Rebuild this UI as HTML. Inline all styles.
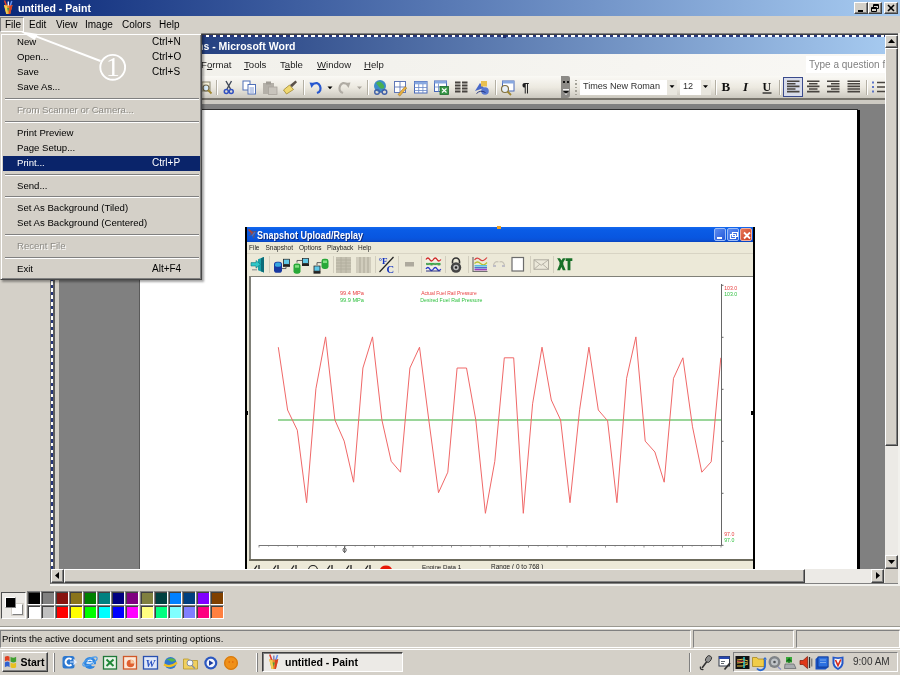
<!DOCTYPE html>
<html><head><meta charset="utf-8"><title>untitled - Paint</title>
<style>
*{box-sizing:border-box;margin:0;padding:0}
html,body{width:900px;height:675px;overflow:hidden;background:#d4d0c8}
#w{position:absolute;left:0;top:0;width:900px;height:675px;overflow:hidden;will-change:transform}
body{position:relative;font-family:"Liberation Sans",sans-serif;font-size:10px;color:#000}
.a{position:absolute}
.t{position:absolute;white-space:nowrap;line-height:12px;height:12px}
.b{font-weight:bold}
#ptitle{left:0;top:0;width:900px;height:16px;background:linear-gradient(90deg,#0a2878 0px,#a6caf0 890px)}
.capbtn{position:absolute;top:2px;height:12px;width:14px;background:#d4d0c8;border:1px solid;border-color:#fff #404040 #404040 #fff;box-shadow:inset -1px -1px 0 #808080}
.raised{background:#d4d0c8;border:1px solid;border-color:#fff #404040 #404040 #fff;box-shadow:inset -1px -1px 0 #808080}
.sunk{border:1px solid;border-color:#808080 #fff #fff #808080}
.sb{background:#ebe9e4}
.mi{position:absolute;left:2px;width:197px;height:15px}
.mi span{margin-left:1px}
.mi span{position:absolute;top:.7px;line-height:12px;font-size:9.600px}
.mi span.k{font-size:10px}
.sep{position:absolute;left:4px;width:194px;height:2px;border-top:1px solid #808080;border-bottom:1px solid #fff}
.dis{color:#8c8a84;text-shadow:1px 1px 0 #fff}
u{text-decoration:underline}
</style></head><body>
<div id="w">
<div class="a" id="ptitle"></div>
<svg class="a" style="left:2px;top:0px" width="12" height="15" viewBox="0 0 12 15"><path d="M2 5h8.500l-2.300 9h-4z" fill="#e88830"/><path d="M2 5h3l.8 9h-1.500z" fill="#f0d050"/><path d="M7.500 5h3l-2.300 9h-1.200z" fill="#d84020"/><path d="M5.200 8l1 4 1-4z" fill="#40a040"/><path d="M2.500 0.500l1.800 5" stroke="#e04030" stroke-width="1.500"/><path d="M6.300 1.500v4" stroke="#f0f0ff" stroke-width="1.400"/><path d="M9.800 1l-1.500 4.500" stroke="#6090f0" stroke-width="1.500"/></svg>
<div class="t b" style="left:18px;top:2px;font-size:10.5px;color:#fff">untitled - Paint</div>
<div class="capbtn" style="left:854px"><svg class="a" style="left:0;top:0" width="12" height="10"><rect x="3" y="7" width="5" height="2" fill="#000"/></svg></div><div class="capbtn" style="left:868px"><svg class="a" style="left:0;top:0" width="12" height="10"><path d="M4.5 1.5h5v4h-5zM4.5 2.5h5" stroke="#000" fill="none"/><path d="M2.500 4.500h5v4h-5z" stroke="#000" fill="#d4d0c8"/><path d="M2.500 5.500h5" stroke="#000" fill="none"/></svg></div><div class="capbtn" style="left:884px"><svg class="a" style="left:0;top:0" width="12" height="10"><path d="M3 2l6 6M9 2l-6 6" stroke="#000" stroke-width="1.6"/></svg></div>
<div class="a" style="left:0;top:16px;width:900px;height:17px;background:#d4d0c8"></div>
<div class="a" style="left:0;top:17px;width:24px;height:15px;border:1px solid;border-color:#808080 #fff #fff #808080"></div>
<div class="t" style="left:5px;top:19px;font-size:10px">File</div><div class="t" style="left:29px;top:19px;font-size:10px">Edit</div><div class="t" style="left:56px;top:19px;font-size:10px">View</div><div class="t" style="left:85px;top:19px;font-size:10px">Image</div><div class="t" style="left:122px;top:19px;font-size:10px">Colors</div><div class="t" style="left:159px;top:19px;font-size:10px">Help</div>
<div class="a" id="cf" style="left:50px;top:33px;width:848px;height:551px;background:#808080;overflow:hidden">
<div class="a" style="left:0px;top:0px;width:848px;height:1px;background:#808080"></div>
<div class="a" style="left:0px;top:1px;width:848px;height:1px;background:#404040"></div>
<div class="a" style="left:0px;top:0px;width:1px;height:551px;background:#6c6c6c"></div>
<div class="a" style="left:5px;top:4px;width:4px;height:532px;background:#d4d0c8"></div>
<div class="a" style="left:9px;top:4px;width:826px;height:17px;background:linear-gradient(90deg,#0a246a 0px,#a6caf0 830px)"></div>
<div class="t" style="left:147px;top:7px;font-size:10.5px;font-weight:bold;color:#fff">ns - Microsoft Word</div>
<div class="a" style="left:9px;top:21px;width:826px;height:22px;background:linear-gradient(90deg,#f1f0ea 0,#f3f2ed 40%,#f9f8f5 100%)"></div>
<div class="t" style="left:151px;top:26px;font-size:9.600px;color:#1c1c1c">F<u>o</u>rmat</div>
<div class="t" style="left:194px;top:26px;font-size:9.600px;color:#1c1c1c"><u>T</u>ools</div>
<div class="t" style="left:230px;top:26px;font-size:9.600px;color:#1c1c1c">T<u>a</u>ble</div>
<div class="t" style="left:267px;top:26px;font-size:9.600px;color:#1c1c1c"><u>W</u>indow</div>
<div class="t" style="left:314px;top:26px;font-size:9.600px;color:#1c1c1c"><u>H</u>elp</div>
<div class="a" style="left:756px;top:23px;width:79px;height:17px;background:#fff"></div>
<div class="t" style="left:759px;top:26px;font-size:10px;color:#808080">Type a question f</div>
<div class="a" style="left:9px;top:43px;width:826px;height:23px;background:linear-gradient(180deg,#faf9f5 0,#ece9e0 50%,#c8c5bc 100%)"></div>
<div class="a" style="left:9px;top:65px;width:826px;height:1.5px;background:#77746c"></div>
<div class="a" style="left:9px;top:66.5px;width:826px;height:4.5px;background:#cdcac2"></div>
<div class="a" style="left:9px;top:71px;width:826px;height:6px;background:#808080"></div>
<div class="a" style="left:90px;top:77px;width:717px;height:459px;background:#fff"></div>
<div class="a" style="left:807px;top:77px;width:3px;height:459px;background:#000"></div>
<div class="a" style="left:89px;top:76px;width:719px;height:1px;background:#303030"></div>
<div class="a" style="left:89px;top:77px;width:1px;height:459px;background:#5a5a5a"></div>
<div class="a" style="left:166px;top:47px;width:1px;height:15px;background:#b4b0a4;box-shadow:1px 0 0 #fff"></div>
<div class="a" style="left:252.5px;top:47px;width:1px;height:15px;background:#b4b0a4;box-shadow:1px 0 0 #fff"></div>
<div class="a" style="left:317px;top:47px;width:1px;height:15px;background:#b4b0a4;box-shadow:1px 0 0 #fff"></div>
<div class="a" style="left:444.5px;top:47px;width:1px;height:15px;background:#b4b0a4;box-shadow:1px 0 0 #fff"></div>
<div class="a" style="left:664.5px;top:47px;width:1px;height:15px;background:#b4b0a4;box-shadow:1px 0 0 #fff"></div>
<div class="a" style="left:729px;top:47px;width:1px;height:15px;background:#b4b0a4;box-shadow:1px 0 0 #fff"></div>
<div class="a" style="left:816px;top:47px;width:1px;height:15px;background:#b4b0a4;box-shadow:1px 0 0 #fff"></div>
<div class="a" style="left:510.5px;top:43px;width:9.5px;height:22px;background:#8c8a86;border-radius:0 2px 3px 0"></div>
<svg class="a" style="left:511px;top:43px" width="10" height="22" viewBox="0 0 10 22"><path d="M2 5h2v2H2zM6 5h2v2H6z" fill="#111"/><path d="M2 13h6v1.300H2z" fill="#f4f4f4"/><path d="M2 15h6l-3 3z" fill="#111"/><path d="M3.500 17.500l1.500 1.500 1.500-1.500z" fill="#fff"/></svg>
<div class="a" style="left:525px;top:47px;width:2px;height:15px;background:repeating-linear-gradient(180deg,#a4a298 0,#a4a298 1.300px,transparent 1.300px,transparent 3.500px)"></div>
<div class="a" style="left:530px;top:46.5px;width:97px;height:15.5px;background:#fff"></div>
<div class="a" style="left:617px;top:47px;width:10px;height:14.5px;background:#e8e6de"></div>
<div class="t" style="left:533px;top:47px;font-size:9.100px;color:#303030">Times New Roman</div>
<div class="a" style="left:629.5px;top:46.5px;width:31px;height:15.5px;background:#fff"></div>
<div class="a" style="left:650.5px;top:47px;width:10px;height:14.5px;background:#e8e6de"></div>
<div class="t" style="left:633px;top:47px;font-size:9.100px;color:#303030">12</div>
<div class="a" style="left:733px;top:44.3px;width:20px;height:19.4px;background:#d8dcea;border:1.500px solid #3a4a8c"></div>
<svg class="a" style="left:150px;top:43px" width="685" height="22" viewBox="200 76 685 22"><rect x="202" y="82" width="8" height="9" fill="#f4f0d8" stroke="#8c8870" stroke-width="1"/><circle cx="206" cy="88" r="3" fill="#d8ecf8" stroke="#70684c" stroke-width="1.200"/><path d="M208 90l3.500 3.500" stroke="#a08830" stroke-width="1.800"/><path d="M226 81l4.500 8M231.500 81l-4.500 8" stroke="#404858" stroke-width="1.400"/><circle cx="226.300" cy="91.500" r="2" fill="none" stroke="#3050c0" stroke-width="1.500"/><circle cx="231.200" cy="91.500" r="2" fill="none" stroke="#3050c0" stroke-width="1.500"/><rect x="243" y="81" width="7" height="9" fill="#fff" stroke="#5070b8" stroke-width="1"/><rect x="248" y="84.500" width="7.500" height="9.500" fill="#fff" stroke="#5070b8" stroke-width="1"/><path d="M249.500 88h4.500M249.500 90h4.500M249.500 92h4.500" stroke="#6080c8" stroke-width=".8"/><rect x="263" y="83" width="11" height="11" fill="#b4b0a8"/><rect x="266" y="81.500" width="5" height="3" fill="#a09c94"/><rect x="268.500" y="87" width="8.500" height="7.500" fill="#c8c4bc" stroke="#a8a49c" stroke-width=".8"/><path d="M283.500 90l6-5 4 4.500-7 4.500z" fill="#f0d870" stroke="#a08830" stroke-width=".8"/><path d="M290 85l5.500-4.500 1.500 1.800-5 5z" fill="#5a5048"/><path d="M312 84.500q6-3.500 8 1.500t-3 7" stroke="#2858d0" stroke-width="2.200" fill="none"/><path d="M309.500 82.500l5.500 0.500-3.500 5z" fill="#2858d0"/><path d="M327.500 86.500h5l-2.500 2.800z" fill="#000"/><path d="M348 84.500q-6-3.500-8 1.500t3 7" stroke="#b0aca4" stroke-width="2.200" fill="none"/><path d="M350.500 82.500l-5.500 0.500 3.500 5z" fill="#b0aca4"/><path d="M357 86.500h5l-2.500 2.800z" fill="#a8a49c"/><circle cx="380" cy="86" r="6" fill="#3c8cc8"/><path d="M376 83q3-3 6 0t2 5q-3 2-5-1t-3-4z" fill="#48b050"/><circle cx="377" cy="92" r="2.300" fill="none" stroke="#4060a8" stroke-width="1.400"/><circle cx="384.500" cy="92" r="2.300" fill="none" stroke="#4060a8" stroke-width="1.400"/><path d="M379 92h3.500" stroke="#4060a8" stroke-width="1.400"/><rect x="394.500" y="81.500" width="11" height="11" fill="#fff" stroke="#6078b8" stroke-width="1"/><path d="M394.500 87h11M400 81.500v11" stroke="#6078b8" stroke-width=".9"/><path d="M398 94.500l7-8 1.800 1.600-7 8z" fill="#e8b040" stroke="#906820" stroke-width=".5"/><rect x="414.500" y="81.500" width="12.500" height="11.500" fill="#fff" stroke="#4868b8" stroke-width="1"/><rect x="414.500" y="81.500" width="12.500" height="2.800" fill="#88a8e0"/><path d="M414.500 87.500h12.500M414.500 90.500h12.500M418.700 84v9M422.900 84v9" stroke="#6888c8" stroke-width=".8"/><rect x="434.500" y="81" width="12" height="10.500" fill="#fff" stroke="#4868b8" stroke-width="1"/><rect x="434.500" y="81" width="12" height="2.500" fill="#88a8e0"/><path d="M434.500 87h12M438.500 83.500v8" stroke="#6888c8" stroke-width=".8"/><rect x="440" y="86.500" width="8.500" height="8" fill="#389848" stroke="#1c6c2c" stroke-width=".8"/><path d="M442 88.500l4.500 4M446.500 88.500l-4.500 4" stroke="#fff" stroke-width="1.200"/><path d="M455 82.500h5.500M455 85.500h5.500M455 88.500h5.500M455 91.500h5.500M462 82.500h5.500M462 85.500h5.500M462 88.500h5.500M462 91.500h5.500" stroke="#484440" stroke-width="2"/><path d="M475 91l5-8 4 5z" fill="#4868c8"/><rect x="481" y="81" width="6" height="5.500" fill="#e8c050"/><circle cx="485" cy="91" r="3.800" fill="#5878d0"/><path d="M476.500 93.500q4-4 9-1" stroke="#283880" fill="none"/><rect x="502.500" y="81" width="11.500" height="10" fill="#fff" stroke="#4868b8" stroke-width="1"/><rect x="502.500" y="81" width="11.500" height="2.500" fill="#88a8e0"/><circle cx="505" cy="89" r="3.500" fill="#e8f0f8" stroke="#807040" stroke-width="1.200"/><path d="M507.500 91.500l3.500 3.500" stroke="#a08830" stroke-width="1.800"/><text x="522" y="92" font-family="Liberation Sans,sans-serif" font-weight="bold" font-size="13" fill="#202020">¶</text><text x="721.500" y="91.300" font-family="Liberation Serif,serif" font-weight="bold" font-size="13" fill="#101010">B</text><text x="743" y="91.300" font-family="Liberation Serif,serif" font-weight="bold" font-style="italic" font-size="13" fill="#101010">I</text><text x="762.500" y="90.500" font-family="Liberation Serif,serif" font-weight="bold" font-size="12" fill="#101010">U</text><path d="M762.500 93h9" stroke="#101010" stroke-width="1.200"/><path d="M787 81.2h12.5M787 83.8h8.5M787 86.4h12.5M787 89h8.5M787 91.6h12.5" stroke="#484440" stroke-width="1.600"/><path d="M807 81.2h12.5M809 83.8h8.5M807 86.4h12.5M809 89h8.5M807 91.6h12.5" stroke="#484440" stroke-width="1.600"/><path d="M827 81.2h12.5M831 83.8h8.5M827 86.4h12.5M831 89h8.5M827 91.6h12.5" stroke="#484440" stroke-width="1.600"/><path d="M847.5 81.2h12.5M847.5 83.8h12.5M847.5 86.4h12.5M847.5 89h12.5M847.5 91.6h12.5" stroke="#484440" stroke-width="1.600"/><path d="M873 81.500v2M873 86v2M873 90.500v2" stroke="#3050c0" stroke-width="1.500"/><path d="M877 82.500h8M877 87h8M877 91.500h8" stroke="#484440" stroke-width="1.400"/><path d="M669.500 85.300h5l-2.500 2.800z" fill="#000"/><path d="M703 85.300h5l-2.500 2.800z" fill="#000"/></svg>
<div class="a" style="left:195px;top:193.5px;width:509.6px;height:344px;background:#000"></div>
<div class="a" style="left:196.5px;top:194px;width:506.5px;height:343px;background:#ece9d8"></div>
<div class="a" style="left:196.5px;top:194px;width:506.5px;height:15px;background:linear-gradient(180deg,#1468ee 0,#0a5ce6 20%,#0856e0 70%,#0a52d8 85%,#0844c0 100%)"></div>
<div class="t" style="left:207px;top:195.5px;font-size:9px;font-weight:bold;color:#fff;text-shadow:1px 1px 0 #0a2a80;transform:scale(1,1.180);transform-origin:0 50%">Snapshot Upload/Replay</div>
<svg class="a" style="left:197px;top:195px" width="10" height="12" viewBox="0 0 10 12"><path d="M1 1l3 4-3 3 4-1 2 4 1-5 2-3-4 0z" fill="#5a5478"/><path d="M1.500 1.500l4 4" stroke="#c04030" stroke-width="1.500"/><path d="M5 8l3-4" stroke="#4070d0" stroke-width="1.300"/></svg>
<div class="a" style="left:663.5px;top:195.2px;width:12.3px;height:12.5px;background:linear-gradient(135deg,#5c8cf0,#2458d8);border:1px solid #9cbcf8;border-radius:2px"></div>
<div class="a" style="left:676.8px;top:195.2px;width:12.3px;height:12.5px;background:linear-gradient(135deg,#5c8cf0,#2458d8);border:1px solid #9cbcf8;border-radius:2px"></div>
<div class="a" style="left:690px;top:195.2px;width:12.3px;height:12.5px;background:linear-gradient(135deg,#e87858,#c83c20);border:1px solid #f0b0a0;border-radius:2px"></div>
<svg class="a" style="left:663.5px;top:195.5px" width="40" height="13" viewBox="0 0 40 13"><rect x="3" y="8" width="5" height="2" fill="#fff"/><path d="M18.500 3.500h5v4h-5zM16.500 5.500h5v4h-5z" stroke="#fff" fill="none" stroke-width="1.200"/><path d="M30 3.500l6 6M36 3.500l-6 6" stroke="#fff" stroke-width="1.800"/></svg>
<div class="t" style="left:199px;top:208.5px;font-size:6.500px;color:#222">File</div>
<div class="t" style="left:215.5px;top:208.5px;font-size:6.500px;color:#222">Snapshot</div>
<div class="t" style="left:249px;top:208.5px;font-size:6.500px;color:#222">Options</div>
<div class="t" style="left:277px;top:208.5px;font-size:6.500px;color:#222">Playback</div>
<div class="t" style="left:308px;top:208.5px;font-size:6.500px;color:#222">Help</div>
<div class="a" style="left:196.5px;top:219.5px;width:506.5px;height:1px;background:#d8d4c4"></div>
<div class="a" style="left:219px;top:223px;width:1px;height:17px;background:#d2cebe"></div>
<div class="a" style="left:283px;top:223px;width:1px;height:17px;background:#d2cebe"></div>
<div class="a" style="left:325px;top:223px;width:1px;height:17px;background:#d2cebe"></div>
<div class="a" style="left:348px;top:223px;width:1px;height:17px;background:#d2cebe"></div>
<div class="a" style="left:371px;top:223px;width:1px;height:17px;background:#d2cebe"></div>
<div class="a" style="left:394.5px;top:223px;width:1px;height:17px;background:#d2cebe"></div>
<div class="a" style="left:418px;top:223px;width:1px;height:17px;background:#d2cebe"></div>
<div class="a" style="left:479.5px;top:223px;width:1px;height:17px;background:#d2cebe"></div>
<div class="a" style="left:502.5px;top:223px;width:1px;height:17px;background:#d2cebe"></div>
<svg class="a" style="left:196px;top:221px" width="340" height="22" viewBox="0 0 340 22"><g transform="translate(0,1.800) scale(1,0.850)"><path d="M12 4l6-2.500v18l-6-2.500z" fill="#18a0a8"/><path d="M15 2.800l3-1.300v18l-3-1.300z" fill="#0c6c78"/><path d="M5 8h5V5.500l4.500 4.500-4.500 4.500V12H5z" fill="#30c8c8" stroke="#0c6c78" stroke-width=".6"/><path d="M6 16.500h5" stroke="#888" stroke-width="1.200"/><rect x="28" y="7" width="8" height="13" rx="3" fill="#1838a0"/><rect x="29" y="8" width="6" height="5" rx="2" fill="#38a8e0"/><rect x="37.500" y="4" width="6" height="6" fill="#60c8e8" stroke="#222" stroke-width=".8"/><rect x="37" y="10" width="7" height="3" fill="#222"/><path d="M36 15h4v-3" stroke="#555" fill="none"/><rect x="47.500" y="9" width="7" height="12" rx="2.500" fill="#28a838"/><rect x="49" y="11" width="4" height="3" fill="#80e080"/><rect x="56.500" y="3" width="6" height="6" fill="#60c8e8" stroke="#222" stroke-width=".8"/><rect x="56" y="9" width="7" height="3" fill="#222"/><path d="M51 8V5.500h5" stroke="#555" fill="none"/><rect x="75.500" y="3.500" width="7" height="12" rx="2.500" fill="#28a838"/><rect x="77" y="5.500" width="4" height="3" fill="#80e080"/><rect x="68" y="12" width="6" height="6" fill="#60c8e8" stroke="#222" stroke-width=".8"/><rect x="67.500" y="18" width="7" height="3" fill="#222"/><path d="M71 11V8h4.500" stroke="#555" fill="none"/></g><rect x="90" y="3" width="15" height="16" fill="#c4c0b0"/><path d="M90 6h15M90 9h15M90 12h15M90 15h15M95 3v16M100 3v16" stroke="#b0ac9c" stroke-width=".8"/><rect x="110" y="3" width="15" height="16" fill="#d0ccbc"/><path d="M114 3v16M118 3v16M122 3v16" stroke="#b8b4a4" stroke-width="1.500"/><path d="M133.500 18L147.500 3" stroke="#222" stroke-width="1.200"/><text x="132.500" y="10" font-family="Liberation Serif,serif" font-weight="bold" font-size="9" fill="#1030c0">°F</text><text x="140.500" y="18.500" font-family="Liberation Serif,serif" font-weight="bold" font-size="10.500" fill="#1030c0">C</text><rect x="159" y="8" width="9" height="4.500" fill="#aeaa9e"/><rect x="179.500" y="3" width="15" height="14.500" fill="#f4f1e4"/><path d="M180 5.500q1.900-3 3.700 0t3.700 0 3.700 0 3.700 0" stroke="#d02828" fill="none" stroke-width="1.400"/><path d="M180 10h14.500" stroke="#38b048" stroke-width="2.200"/><path d="M180 10.500q1.900-2 3.700 0t3.700 0 3.700 0 3.700 0" stroke="#909888" fill="none" stroke-width=".8"/><path d="M180 15q1.900-3 3.700 0t3.700 0 3.700 0 3.700 0" stroke="#2838c8" fill="none" stroke-width="1.400"/><path d="M180 17h14.500" stroke="#283080" stroke-width="1"/><path d="M206.500 9.500V7.500a3.500 3.500 0 0 1 7 0V9.500" stroke="#333" stroke-width="1.600" fill="none"/><circle cx="210" cy="13.500" r="5.200" fill="#444"/><circle cx="210" cy="13.500" r="2.800" fill="#bbb"/><circle cx="210" cy="13.500" r="1.200" fill="#222"/><path d="M227 3v14.500h14.500" stroke="#707070" fill="none" stroke-width="1.200"/><path d="M228.500 6q2.500-3.500 5.500-.5t7-2" stroke="#d84040" fill="none" stroke-width="1.200"/><path d="M228.500 9.500q3-3 6 0t6.500-1" stroke="#b8c030" fill="none" stroke-width="1.200"/><path d="M228.500 11.800h12.500" stroke="#58c0e0" stroke-width="1.600"/><path d="M228.500 13.800h12.500" stroke="#4060d0" stroke-width="1.400"/><path d="M228.500 15.700h12.500" stroke="#a040c0" stroke-width="1.400"/><path d="M247.500 11q1.500-4.500 5-3M258.500 11q-1.500-4.500-5-3" stroke="#c4c0b4" fill="none" stroke-width="1.100"/><path d="M247 12h3M256 12h3" stroke="#b0b0c0" stroke-width="1.300"/><rect x="266" y="3.500" width="11.500" height="13.500" fill="#fff" stroke="#6c6c6c" stroke-width="1.200"/><rect x="288" y="5.800" width="14.500" height="9.500" fill="#ebe8da" stroke="#b0aca0" stroke-width="1"/><path d="M288 5.800l7.200 5.500 7.300-5.500M288 15.300l5.700-5M302.500 15.300l-5.700-5" stroke="#b0aca0" fill="none" stroke-width=".9"/><g transform="translate(0,1.800) scale(.95,.8)"><path d="M327.500 3l2.500 5v3l-2.500 7h3l1.500-4 1.500 4h3l-2.500-7V8l2.500-5h-3l-1.500 3-1.500-3z" fill="#187028"/><path d="M336.500 3h7v3.500h-2V18h-3V6.500h-2z" fill="#187028"/></g></svg>
<div class="a" style="left:199px;top:242.5px;width:504px;height:284px;background:#808078"></div>
<div class="a" style="left:200.5px;top:244px;width:502.5px;height:282px;background:#fff"></div>
<div class="a" style="left:199px;top:526px;width:504px;height:1.5px;background:#6c6a5c"></div>
<div class="a" style="left:196.5px;top:527.5px;width:506.5px;height:9px;background:#ece9d8"></div>
<div class="t" style="left:372px;top:528px;font-size:6.200px;color:#222">Engine Data 1</div>
<div class="t" style="left:441px;top:528px;font-size:6.500px;color:#222">Range ( 0 to 768 )</div>
<svg class="a" style="left:200px;top:529px" width="150" height="8" viewBox="0 0 150 8"><path d="M9 3v5M7 3.500l-3 4.500" stroke="#222" stroke-width="1.300" fill="none"/><path d="M28 3v5M26 3.500l-3 4.500" stroke="#222" stroke-width="1.300" fill="none"/><path d="M46 3v5M44 3.500l-3 4.500" stroke="#222" stroke-width="1.300" fill="none"/><circle cx="63" cy="8" r="4.500" fill="none" stroke="#222" stroke-width="1.200"/><path d="M82 3v5M80 3.500l-3 4.500" stroke="#222" stroke-width="1.300" fill="none"/><path d="M101 3v5M99 3.500l-3 4.500" stroke="#222" stroke-width="1.300" fill="none"/><path d="M120 3v5M118 3.500l-3 4.500" stroke="#222" stroke-width="1.300" fill="none"/><ellipse cx="136" cy="8" rx="6" ry="4.500" fill="#e81808"/></svg>
<svg class="a" style="left:200px;top:243.2px" width="503" height="282" viewBox="0 0 503 282"><path d="M28 144H471" stroke="#78c878" stroke-width="1.300"/><polyline fill="none" stroke="#f06868" stroke-width="1" stroke-linejoin="miter" points="28.3,71.2 37.6,134.0 47.3,154.2 56.6,226.7 65.9,112.8 75.6,60.9 84.9,144.0 94.2,165.1 103.6,206.2 112.9,92.0 122.5,60.9 131.9,144.0 141.2,185.3 150.5,196.2 159.9,92.0 169.5,71.2 178.8,144.0 188.5,216.7 197.8,196.2 207.1,92.0 216.5,92.0 225.8,144.0 235.4,237.3 244.8,185.3 254.3,81.8 263.7,81.8 273.3,237.3 282.6,127.8 292.0,71.2 301.3,124.0 310.6,144.0 320.0,226.7 329.6,133.8 338.9,71.2 348.3,134.0 357.6,144.8 366.9,226.7 376.6,102.3 385.9,60.9 395.2,165.1 404.9,176.0 414.2,206.2 423.5,102.3 432.9,81.8 442.5,150.8 451.8,196.2 461.2,185.8 470.8,81.8"/><path d="M471.5 8V269" stroke="#666" stroke-width="1"/><path d="M471.5 9.3h2" stroke="#666" stroke-width="1"/><path d="M471.5 61.3h2" stroke="#666" stroke-width="1"/><path d="M471.5 113.3h2" stroke="#666" stroke-width="1"/><path d="M471.5 165.3h2" stroke="#666" stroke-width="1"/><path d="M471.5 217.3h2" stroke="#666" stroke-width="1"/><path d="M471.5 269.3h2" stroke="#666" stroke-width="1"/><path d="M9 269.500H472" stroke="#777" stroke-width="1"/><path d="M9.0 269v2.5M18.6 269v1.5M28.2 269v1.5M37.9 269v1.5M47.5 269v2.5M57.1 269v1.5M66.8 269v1.5M76.4 269v1.5M86.0 269v2.5M95.6 269v1.5M105.2 269v1.5M114.9 269v1.5M124.5 269v2.5M134.1 269v1.5M143.8 269v1.5M153.4 269v1.5M163.0 269v2.5M172.6 269v1.5M182.2 269v1.5M191.9 269v1.5M201.5 269v2.5M211.1 269v1.5M220.8 269v1.5M230.4 269v1.5M240.0 269v2.5M249.6 269v1.5M259.2 269v1.5M268.9 269v1.5M278.5 269v2.5M288.1 269v1.5M297.8 269v1.5M307.4 269v1.5M317.0 269v2.5M326.6 269v1.5M336.2 269v1.5M345.9 269v1.5M355.5 269v2.5M365.1 269v1.5M374.8 269v1.5M384.4 269v1.5M394.0 269v2.5M403.6 269v1.5M413.2 269v1.5M422.9 269v1.5M432.5 269v2.5M442.1 269v1.5M451.8 269v1.5M461.4 269v1.5M471.0 269v2.5" stroke="#777" stroke-width=".8"/><path d="M94.6 270v7M93.1 273l1.500-1.500 1.500 1.500v2l-1.500 1.500-1.500-1.500z" stroke="#555" stroke-width=".9" fill="#fff"/><text x="90" y="19.3" font-family="Liberation Sans,sans-serif" font-size="5.6" fill="#e84040" text-anchor="start">99.4 MPa</text><text x="90" y="25.8" font-family="Liberation Sans,sans-serif" font-size="5.6" fill="#30c040" text-anchor="start">99.9 MPa</text><text x="171.2" y="19.3" font-family="Liberation Sans,sans-serif" font-size="5.300" fill="#e84040" textLength="55.500" lengthAdjust="spacingAndGlyphs">Actual Fuel Rail Pressure</text><text x="170.3" y="25.8" font-family="Liberation Sans,sans-serif" font-size="5.300" fill="#30c040" textLength="62" lengthAdjust="spacingAndGlyphs">Desired Fuel Rail Pressure</text><text x="474.2" y="13.8" font-family="Liberation Sans,sans-serif" font-size="5.2" fill="#e84040" text-anchor="start">103.0</text><text x="474.2" y="20.3" font-family="Liberation Sans,sans-serif" font-size="5.2" fill="#30c040" text-anchor="start">103.0</text><text x="474.2" y="259.8" font-family="Liberation Sans,sans-serif" font-size="5.2" fill="#e84040" text-anchor="start">97.0</text><text x="474.2" y="266.3" font-family="Liberation Sans,sans-serif" font-size="5.2" fill="#30c040" text-anchor="start">97.0</text></svg>
<div class="a" style="left:195px;top:377.5px;width:3px;height:4px;background:#000"></div>
<div class="a" style="left:700.5px;top:377.5px;width:4px;height:4px;background:#000"></div>
<div class="a" style="left:447px;top:193px;width:4px;height:3px;background:#f0a020"></div>
<div class="a" style="left:1px;top:2.4px;width:834px;height:1.9px;background:repeating-linear-gradient(90deg,#fff 0,#fff 3.500px,#26367a 3.500px,#26367a 7.030px)"></div>
<div class="a" style="left:3px;top:4px;width:2px;height:532px;background:#5c5c5c"></div>
<div class="a" style="left:1.3px;top:2.4px;width:1.8px;height:534px;background:repeating-linear-gradient(180deg,#fff 0,#fff 3.500px,#26367a 3.500px,#26367a 7.030px)"></div>
<div class="a" style="left:453px;top:2px;width:3px;height:3px;background:#1c2c6c"></div>
<div class="a" style="left:835px;top:2px;width:13px;height:534px;background:#eceae6"></div>
<div class="a" style="left:835px;top:2px;width:13px;height:13px;"><div class="a raised" style="left:0;top:0;width:13px;height:13px"></div><svg class="a" style="left:3px;top:4px" width="7" height="4"><path d="M0 4h7L3.5 0z" fill="#000"/></svg></div>
<div class="a" style="left:835px;top:15px;width:13px;height:398px;"><div class="a raised" style="left:0;top:0;width:13px;height:398px"></div></div>
<div class="a" style="left:835px;top:522px;width:13px;height:14px;"><div class="a raised" style="left:0;top:0;width:13px;height:14px"></div><svg class="a" style="left:3px;top:5px" width="7" height="4"><path d="M0 0h7L3.5 4z" fill="#000"/></svg></div>
<div class="a" style="left:1px;top:536px;width:834px;height:14px;background:#eceae6"></div>
<div class="a" style="left:1px;top:536px;width:13px;height:14px;"><div class="a raised" style="left:0;top:0;width:13px;height:14px"></div><svg class="a" style="left:4px;top:3px" width="4" height="7"><path d="M4 0v7L0 3.5z" fill="#000"/></svg></div>
<div class="a" style="left:14px;top:536px;width:741px;height:14px;"><div class="a raised" style="left:0;top:0;width:741px;height:14px"></div></div>
<div class="a" style="left:821px;top:536px;width:13px;height:14px;"><div class="a raised" style="left:0;top:0;width:13px;height:14px"></div><svg class="a" style="left:5px;top:3px" width="4" height="7"><path d="M0 0v7L4 3.500z" fill="#000"/></svg></div>
<div class="a" style="left:835px;top:536px;width:13px;height:14px;background:#d4d0c8"></div>
</div>
<div class="a" style="left:898.400px;top:33px;width:1.600px;height:553px;background:#f2f1ed"></div>
<div class="a" style="left:50px;top:583.500px;width:850px;height:2.300px;background:#f2f1ed"></div>
<div class="a" id="fm" style="left:0;top:33px;width:201.500px;height:246.700px;background:#d4d0c8;border:1px solid;border-color:#d4d0c8 #484848 #484848 #d4d0c8;box-shadow:inset 1px 1px 0 #fff,inset -1px -1px 0 #808080,1.500px 1.500px 2px rgba(0,0,0,.35)">
<div class="mi" style="top:1.70px;"><span style="left:13px">New</span><span class="k" style="left:148px">Ctrl+N</span></div>
<div class="mi" style="top:16.64px;"><span style="left:13px">Open...</span><span class="k" style="left:148px">Ctrl+O</span></div>
<div class="mi" style="top:31.58px;"><span style="left:13px">Save</span><span class="k" style="left:148px">Ctrl+S</span></div>
<div class="mi" style="top:46.52px;"><span style="left:13px">Save As...</span></div>
<div class="sep" style="top:64.06px"></div>
<div class="mi dis" style="top:69.37px;"><span style="left:13px">From Scanner or Camera...</span></div>
<div class="sep" style="top:86.91px"></div>
<div class="mi" style="top:92.22px;"><span style="left:13px">Print Preview</span></div>
<div class="mi" style="top:107.16px;"><span style="left:13px">Page Setup...</span></div>
<div class="mi" style="top:122.10px;background:#0a246a;color:#fff;"><span style="left:13px">Print...</span><span class="k" style="left:148px">Ctrl+P</span></div>
<div class="sep" style="top:139.64px"></div>
<div class="mi" style="top:144.95px;"><span style="left:13px">Send...</span></div>
<div class="sep" style="top:162.49px"></div>
<div class="mi" style="top:167.80px;"><span style="left:13px">Set As Background (Tiled)</span></div>
<div class="mi" style="top:182.74px;"><span style="left:13px">Set As Background (Centered)</span></div>
<div class="sep" style="top:200.28px"></div>
<div class="mi dis" style="top:205.59px;"><span style="left:13px">Recent File</span></div>
<div class="sep" style="top:223.13px"></div>
<div class="mi" style="top:228.44px;"><span style="left:13px">Exit</span><span class="k" style="left:148px">Alt+F4</span></div>
</div>
<svg class="a" style="left:0;top:20px" width="140" height="70" viewBox="0 20 140 70"><path d="M34 35.600L100.500 61" stroke="#fff" stroke-width="2" fill="none"/><path d="M20 31.300l18 2.700-3.300 6z" fill="#fff"/><circle cx="112.700" cy="67.300" r="12.400" fill="none" stroke="#fff" stroke-width="1.900"/><text x="112.800" y="76" font-family="Liberation Serif,serif" font-size="27.500" fill="#fff" text-anchor="middle">1</text></svg>
<div class="a" style="left:1px;top:591.500px;width:25px;height:27.500px;background:#eceae6;border:1px solid;border-color:#505050 #fff #fff #505050"></div>
<div class="a" style="left:11.500px;top:603.500px;width:11.500px;height:11px;background:#fff;border:1px solid;border-color:#fff #808080 #808080 #fff;box-shadow:0 0 0 1px #d4d0c8"></div>
<div class="a" style="left:4.500px;top:597px;width:11.500px;height:11px;background:#000;border:1px solid;border-color:#fff #808080 #808080 #fff"></div>
<div class="a" style="left:27.0px;top:591px;width:14px;height:14px;background:#000000;border:1px solid;border-color:#808080 #fff #fff #808080;box-shadow:inset 1px 1px 0 #404040"></div><div class="a" style="left:41.1px;top:591px;width:14px;height:14px;background:#808080;border:1px solid;border-color:#808080 #fff #fff #808080;box-shadow:inset 1px 1px 0 #404040"></div><div class="a" style="left:55.1px;top:591px;width:14px;height:14px;background:#881410;border:1px solid;border-color:#808080 #fff #fff #808080;box-shadow:inset 1px 1px 0 #404040"></div><div class="a" style="left:69.2px;top:591px;width:14px;height:14px;background:#8a741c;border:1px solid;border-color:#808080 #fff #fff #808080;box-shadow:inset 1px 1px 0 #404040"></div><div class="a" style="left:83.2px;top:591px;width:14px;height:14px;background:#008000;border:1px solid;border-color:#808080 #fff #fff #808080;box-shadow:inset 1px 1px 0 #404040"></div><div class="a" style="left:97.3px;top:591px;width:14px;height:14px;background:#008080;border:1px solid;border-color:#808080 #fff #fff #808080;box-shadow:inset 1px 1px 0 #404040"></div><div class="a" style="left:111.4px;top:591px;width:14px;height:14px;background:#000080;border:1px solid;border-color:#808080 #fff #fff #808080;box-shadow:inset 1px 1px 0 #404040"></div><div class="a" style="left:125.4px;top:591px;width:14px;height:14px;background:#800080;border:1px solid;border-color:#808080 #fff #fff #808080;box-shadow:inset 1px 1px 0 #404040"></div><div class="a" style="left:139.5px;top:591px;width:14px;height:14px;background:#808040;border:1px solid;border-color:#808080 #fff #fff #808080;box-shadow:inset 1px 1px 0 #404040"></div><div class="a" style="left:153.5px;top:591px;width:14px;height:14px;background:#004040;border:1px solid;border-color:#808080 #fff #fff #808080;box-shadow:inset 1px 1px 0 #404040"></div><div class="a" style="left:167.6px;top:591px;width:14px;height:14px;background:#0080ff;border:1px solid;border-color:#808080 #fff #fff #808080;box-shadow:inset 1px 1px 0 #404040"></div><div class="a" style="left:181.7px;top:591px;width:14px;height:14px;background:#004080;border:1px solid;border-color:#808080 #fff #fff #808080;box-shadow:inset 1px 1px 0 #404040"></div><div class="a" style="left:195.7px;top:591px;width:14px;height:14px;background:#8000ff;border:1px solid;border-color:#808080 #fff #fff #808080;box-shadow:inset 1px 1px 0 #404040"></div><div class="a" style="left:209.8px;top:591px;width:14px;height:14px;background:#804000;border:1px solid;border-color:#808080 #fff #fff #808080;box-shadow:inset 1px 1px 0 #404040"></div>
<div class="a" style="left:27.0px;top:605px;width:14px;height:14px;background:#ffffff;border:1px solid;border-color:#808080 #fff #fff #808080;box-shadow:inset 1px 1px 0 #404040"></div><div class="a" style="left:41.1px;top:605px;width:14px;height:14px;background:#c0c0c0;border:1px solid;border-color:#808080 #fff #fff #808080;box-shadow:inset 1px 1px 0 #404040"></div><div class="a" style="left:55.1px;top:605px;width:14px;height:14px;background:#ff0000;border:1px solid;border-color:#808080 #fff #fff #808080;box-shadow:inset 1px 1px 0 #404040"></div><div class="a" style="left:69.2px;top:605px;width:14px;height:14px;background:#ffff00;border:1px solid;border-color:#808080 #fff #fff #808080;box-shadow:inset 1px 1px 0 #404040"></div><div class="a" style="left:83.2px;top:605px;width:14px;height:14px;background:#00ff00;border:1px solid;border-color:#808080 #fff #fff #808080;box-shadow:inset 1px 1px 0 #404040"></div><div class="a" style="left:97.3px;top:605px;width:14px;height:14px;background:#00ffff;border:1px solid;border-color:#808080 #fff #fff #808080;box-shadow:inset 1px 1px 0 #404040"></div><div class="a" style="left:111.4px;top:605px;width:14px;height:14px;background:#0000ff;border:1px solid;border-color:#808080 #fff #fff #808080;box-shadow:inset 1px 1px 0 #404040"></div><div class="a" style="left:125.4px;top:605px;width:14px;height:14px;background:#ff00ff;border:1px solid;border-color:#808080 #fff #fff #808080;box-shadow:inset 1px 1px 0 #404040"></div><div class="a" style="left:139.5px;top:605px;width:14px;height:14px;background:#ffff80;border:1px solid;border-color:#808080 #fff #fff #808080;box-shadow:inset 1px 1px 0 #404040"></div><div class="a" style="left:153.5px;top:605px;width:14px;height:14px;background:#00ff80;border:1px solid;border-color:#808080 #fff #fff #808080;box-shadow:inset 1px 1px 0 #404040"></div><div class="a" style="left:167.6px;top:605px;width:14px;height:14px;background:#80ffff;border:1px solid;border-color:#808080 #fff #fff #808080;box-shadow:inset 1px 1px 0 #404040"></div><div class="a" style="left:181.7px;top:605px;width:14px;height:14px;background:#8080ff;border:1px solid;border-color:#808080 #fff #fff #808080;box-shadow:inset 1px 1px 0 #404040"></div><div class="a" style="left:195.7px;top:605px;width:14px;height:14px;background:#ff0080;border:1px solid;border-color:#808080 #fff #fff #808080;box-shadow:inset 1px 1px 0 #404040"></div><div class="a" style="left:209.8px;top:605px;width:14px;height:14px;background:#ff8040;border:1px solid;border-color:#808080 #fff #fff #808080;box-shadow:inset 1px 1px 0 #404040"></div>
<div class="a" style="left:0;top:626px;width:900px;height:1px;background:#9a9890"></div>
<div class="a" style="left:0;top:627px;width:900px;height:1.500px;background:#fff"></div>
<div class="a sunk" style="left:0;top:630px;width:691px;height:18px"></div>
<div class="a sunk" style="left:693px;top:630px;width:101px;height:18px"></div>
<div class="a sunk" style="left:796px;top:630px;width:104px;height:18px"></div>
<div class="t" style="left:2px;top:633px;font-size:9.550px">Prints the active document and sets printing options.</div>
<div class="a" style="left:0;top:649px;width:900px;height:1px;background:#fff"></div>
<div class="a raised" style="left:2px;top:652px;width:46px;height:20px"></div>
<svg class="a" style="left:3px;top:654px" width="15" height="15" viewBox="0 0 16 16"><path d="M2 3q3-2 5 0v5q-2-2-5 0z" fill="#e04020"/><path d="M8 3q3 2 6 0v5q-3 2-6 0z" fill="#40a030"/><path d="M2 9q3-2 5 0v5q-2-2-5 0z" fill="#3060d0"/><path d="M8 9q3 2 6 0v5q-3 2-6 0z" fill="#e8c020"/></svg>
<div class="t b" style="left:20.500px;top:656px;font-size:10.500px">Start</div>
<div class="a" style="left:53px;top:653px;width:2px;height:19px;border-left:1px solid #fff;border-right:1px solid #808080"></div>
<svg class="a" style="left:60px;top:654px" width="182" height="17" viewBox="60 654 182 17"><rect x="62.500" y="656" width="12" height="12.500" rx="2.500" fill="#2c78d0"/><path d="M71.500 659.500a3.500 3.500 0 1 0 0 5" stroke="#fff" stroke-width="2" fill="none"/><path d="M70 662h6l-2.500-2.500M76 662l-2.500 2.500" stroke="#e8f0ff" stroke-width="1.200" fill="none"/><circle cx="90" cy="663" r="6" fill="#2c84e0"/><path d="M86.500 663h7.500" stroke="#fff" stroke-width="1.500"/><path d="M87.500 661.300q2.500-2.500 5 0" stroke="#fff" stroke-width="1.200" fill="none"/><path d="M90.500 664.300h5.500v2h-4z" fill="#d4d0c8"/><ellipse cx="90" cy="661.500" rx="8" ry="2.800" fill="none" stroke="#4c9cec" stroke-width="1.200" transform="rotate(-28 90 661.500)"/><rect x="103.500" y="656.500" width="13" height="12.500" fill="#e8f4e8" stroke="#207838" stroke-width="1.300"/><path d="M106.500 659.500l7 6.500M113.500 659.500l-7 6.500" stroke="#208838" stroke-width="2"/><rect x="123.500" y="656.500" width="13" height="12.500" fill="#fce8d8" stroke="#d05828" stroke-width="1.300"/><circle cx="130.500" cy="663.500" r="3.800" fill="#e06030"/><path d="M130.500 663.500v-3.800a3.800 3.800 0 0 1 3.800 3.800z" fill="#f8c8a0"/><rect x="143.500" y="656.500" width="14" height="12.500" fill="#e0e8f8" stroke="#2850b0" stroke-width="1.300"/><text x="150.500" y="667" font-family="Liberation Serif,serif" font-weight="bold" font-style="italic" font-size="11" fill="#2850c0" text-anchor="middle">W</text><circle cx="170.500" cy="663" r="6" fill="#3078d0"/><path d="M165 661q5-5 11-1-4 3-6 1t-5 0z" fill="#58b848"/><path d="M164 664.500q6 4 13-2" stroke="#f0c020" stroke-width="2.200" fill="none"/><path d="M183.500 659h5l1.500 1.500h7.500v8.500h-14z" fill="#f0d060" stroke="#b89828" stroke-width=".8"/><circle cx="190" cy="663" r="3" fill="#f4f8fc" stroke="#8890a0" stroke-width="1"/><path d="M192 665.500l3 3" stroke="#8890a0" stroke-width="1.500"/><circle cx="210.800" cy="663" r="6.500" fill="#2c58c0"/><circle cx="210.800" cy="663" r="4.300" fill="#f4f6fc"/><path d="M209 660.300v5.400l4.500-2.700z" fill="#1c3ca0"/><circle cx="231" cy="663" r="7" fill="#f09018"/><circle cx="231" cy="663" r="6.300" fill="none" stroke="#c86c08" stroke-width=".8"/><path d="M228.500 662h1.500M232 662h1.500" stroke="#e06808" stroke-width="1.500"/></svg>
<div class="a" style="left:256px;top:653px;width:2px;height:19px;border-left:1px solid #fff;border-right:1px solid #808080"></div>
<div class="a" style="left:262px;top:652px;width:141px;height:20px;background:#eceae6;border:1px solid;border-color:#404040 #fff #fff #404040;box-shadow:inset 1px 1px 0 #808080"></div>
<svg class="a" style="left:267px;top:654px" width="13" height="16" viewBox="0 0 12 15"><path d="M2 5h8.500l-2.300 9h-4z" fill="#e88830"/><path d="M2 5h3l.8 9h-1.500z" fill="#f0d050"/><path d="M7.500 5h3l-2.300 9h-1.200z" fill="#d84020"/><path d="M5.200 8l1 4 1-4z" fill="#40a040"/><path d="M2.500 0.500l1.800 5" stroke="#e04030" stroke-width="1.500"/><path d="M6.300 1.500v4" stroke="#8080c0" stroke-width="1.400"/><path d="M9.800 1l-1.500 4.500" stroke="#6090f0" stroke-width="1.500"/></svg>
<div class="t b" style="left:285px;top:656px;font-size:10.5px">untitled - Paint</div>
<div class="a" style="left:689px;top:653px;width:2px;height:19px;border-left:1px solid #808080;border-right:1px solid #fff"></div>
<div class="a sunk" style="left:733px;top:652px;width:165px;height:20px"></div>
<svg class="a" style="left:696px;top:653px" width="152" height="19" viewBox="696 653 152 19"><path d="M702 668l6-8" stroke="#303030" stroke-width="1.600"/><rect x="706" y="655.500" width="5" height="7" rx="2.500" fill="#909090" stroke="#303030" stroke-width=".9" transform="rotate(35 708.500 659)"/><path d="M700.500 666.500q-1 3.500 3 3" stroke="#303030" fill="none" stroke-width="1.200"/><rect x="719" y="656.500" width="10.500" height="9.500" fill="#fff" stroke="#303848" stroke-width="1"/><rect x="719" y="656.500" width="10.500" height="2.500" fill="#2848b0"/><path d="M721 661.500h4M721 663.500h3" stroke="#505860" stroke-width=".9"/><path d="M724.500 669.500l5.500-6.500" stroke="#303030" stroke-width="1.800"/><rect x="735.500" y="656" width="14" height="13" fill="#101010"/><path d="M737 660q5-2 11 1M737 663q5-1 11 0M737 666q5 1 11-2" stroke="#e8c040" stroke-width="1" fill="none"/><path d="M744 657v11" stroke="#30c0c0" stroke-width="1.600"/><path d="M737 661.500q5-1 7 0" stroke="#e05050" stroke-width="1" fill="none"/><path d="M752.500 657.500h4.500l1 1.500h6v7.500h-11.500z" fill="#f0cc48" stroke="#a88820" stroke-width=".8"/><path d="M757 668.500a4.500 4.500 0 0 0 8-3v-6" stroke="#2868d0" stroke-width="1.800" fill="none"/><path d="M763 659.500l2-2.500 2 2.500z" fill="#2868d0"/><circle cx="774.500" cy="662" r="6" fill="#808488"/><circle cx="774.500" cy="662" r="3.500" fill="#c0c4c8"/><circle cx="774.500" cy="662" r="1.300" fill="#505458"/><path d="M778 667l3 2.500" stroke="#8890c8" stroke-width="1.400"/><path d="M785 664h9l2 4.500h-11.500z" fill="#a8acb0" stroke="#606468" stroke-width=".7"/><rect x="786" y="657" width="6" height="5.500" fill="#38a838"/><path d="M789 663v-4l-2.500 2.500M789 659l2.500 2.500" stroke="#106818" stroke-width="1.200" fill="none"/><path d="M800 660.500h3l4.500-4v12l-4.500-4h-3z" fill="#e03818" stroke="#801808" stroke-width=".7"/><path d="M809.500 657v11" stroke="#303030" stroke-width="1.300"/><path d="M811.800 658.500v8" stroke="#606060" stroke-width="1"/><path d="M815.500 659l3-2.500h10v10.500l-3 2.500h-10z" fill="#1850c0"/><rect x="818" y="657" width="10" height="10" fill="#2c70e0" stroke="#103890" stroke-width=".8"/><path d="M820 660h6M820 662.500h6" stroke="#90b8f0" stroke-width=".8"/><path d="M832.500 656.500q5.500 1.500 11 0v7q-1 4.500-5.500 6.500-4.500-2-5.500-6.500z" fill="#2458c8"/><path d="M834.500 658.500q3.500 .8 7 0v5q-.8 3-3.500 4.500-2.700-1.500-3.500-4.500z" fill="#f4f6fc"/><path d="M835.500 660l2.500 5.500 2.800-6" stroke="#d82818" stroke-width="1.600" fill="none"/></svg>
<div class="t" style="left:853px;top:656px;font-size:10px;color:#333">9:00 AM</div>
</div>
</body></html>
